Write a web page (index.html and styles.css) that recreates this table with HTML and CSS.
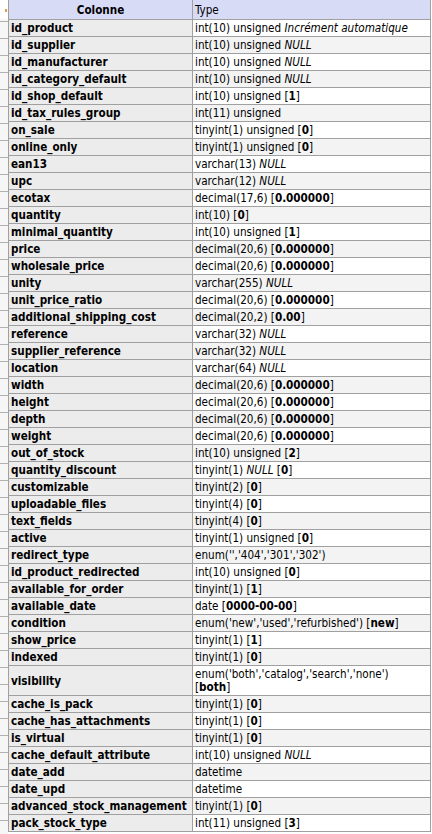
FILE: index.html
```html
<!DOCTYPE html>
<html>
<head>
<meta charset="utf-8">
<link rel="stylesheet" href="styles.css">
</head>
<body>
<div class="page">
  <div class="strip">
    <div class="strip-top"><span class="dot"></span></div>
  </div>
  <table class="struct">
    <thead>
      <tr><th class="col-name">Colonne</th><th class="col-type">Type</th></tr>
    </thead>
    <tbody>
      <tr><th>id_product</th><td>int(10) unsigned <i>Incrément automatique</i></td></tr>
      <tr class="odd"><th>id_supplier</th><td>int(10) unsigned <i>NULL</i></td></tr>
      <tr><th>id_manufacturer</th><td>int(10) unsigned <i>NULL</i></td></tr>
      <tr class="odd"><th>id_category_default</th><td>int(10) unsigned <i>NULL</i></td></tr>
      <tr><th>id_shop_default</th><td>int(10) unsigned [<b>1</b>]</td></tr>
      <tr class="odd"><th>id_tax_rules_group</th><td>int(11) unsigned</td></tr>
      <tr><th>on_sale</th><td>tinyint(1) unsigned [<b>0</b>]</td></tr>
      <tr class="odd"><th>online_only</th><td>tinyint(1) unsigned [<b>0</b>]</td></tr>
      <tr><th>ean13</th><td>varchar(13) <i>NULL</i></td></tr>
      <tr class="odd"><th>upc</th><td>varchar(12) <i>NULL</i></td></tr>
      <tr><th>ecotax</th><td>decimal(17,6) [<b>0.000000</b>]</td></tr>
      <tr class="odd"><th>quantity</th><td>int(10) [<b>0</b>]</td></tr>
      <tr><th>minimal_quantity</th><td>int(10) unsigned [<b>1</b>]</td></tr>
      <tr class="odd"><th>price</th><td>decimal(20,6) [<b>0.000000</b>]</td></tr>
      <tr><th>wholesale_price</th><td>decimal(20,6) [<b>0.000000</b>]</td></tr>
      <tr class="odd"><th>unity</th><td>varchar(255) <i>NULL</i></td></tr>
      <tr><th>unit_price_ratio</th><td>decimal(20,6) [<b>0.000000</b>]</td></tr>
      <tr class="odd"><th>additional_shipping_cost</th><td>decimal(20,2) [<b>0.00</b>]</td></tr>
      <tr><th>reference</th><td>varchar(32) <i>NULL</i></td></tr>
      <tr class="odd"><th>supplier_reference</th><td>varchar(32) <i>NULL</i></td></tr>
      <tr><th>location</th><td>varchar(64) <i>NULL</i></td></tr>
      <tr class="odd"><th>width</th><td>decimal(20,6) [<b>0.000000</b>]</td></tr>
      <tr><th>height</th><td>decimal(20,6) [<b>0.000000</b>]</td></tr>
      <tr class="odd"><th>depth</th><td>decimal(20,6) [<b>0.000000</b>]</td></tr>
      <tr><th>weight</th><td>decimal(20,6) [<b>0.000000</b>]</td></tr>
      <tr class="odd"><th>out_of_stock</th><td>int(10) unsigned [<b>2</b>]</td></tr>
      <tr><th>quantity_discount</th><td>tinyint(1) <i>NULL</i> [<b>0</b>]</td></tr>
      <tr class="odd"><th>customizable</th><td>tinyint(2) [<b>0</b>]</td></tr>
      <tr><th>uploadable_files</th><td>tinyint(4) [<b>0</b>]</td></tr>
      <tr class="odd"><th>text_fields</th><td>tinyint(4) [<b>0</b>]</td></tr>
      <tr><th>active</th><td>tinyint(1) unsigned [<b>0</b>]</td></tr>
      <tr class="odd"><th>redirect_type</th><td>enum('','404','301','302')</td></tr>
      <tr><th>id_product_redirected</th><td>int(10) unsigned [<b>0</b>]</td></tr>
      <tr class="odd"><th>available_for_order</th><td>tinyint(1) [<b>1</b>]</td></tr>
      <tr><th>available_date</th><td>date [<b>0000-00-00</b>]</td></tr>
      <tr class="odd"><th>condition</th><td>enum('new','used','refurbished') [<b>new</b>]</td></tr>
      <tr><th>show_price</th><td>tinyint(1) [<b>1</b>]</td></tr>
      <tr class="odd"><th>indexed</th><td>tinyint(1) [<b>0</b>]</td></tr>
      <tr><th>visibility</th><td>enum('both','catalog','search','none')<br>[<b>both</b>]</td></tr>
      <tr class="odd"><th>cache_is_pack</th><td>tinyint(1) [<b>0</b>]</td></tr>
      <tr><th>cache_has_attachments</th><td>tinyint(1) [<b>0</b>]</td></tr>
      <tr class="odd"><th>is_virtual</th><td>tinyint(1) [<b>0</b>]</td></tr>
      <tr><th>cache_default_attribute</th><td>int(10) unsigned <i>NULL</i></td></tr>
      <tr class="odd"><th>date_add</th><td>datetime</td></tr>
      <tr><th>date_upd</th><td>datetime</td></tr>
      <tr class="odd"><th>advanced_stock_management</th><td>tinyint(1) [<b>0</b>]</td></tr>
      <tr><th>pack_stock_type</th><td>int(11) unsigned [<b>3</b>]</td></tr>
    </tbody>
  </table>
</div>
</body>
</html>
```

FILE: styles.css
```css
html, body {
  margin: 0;
  padding: 0;
  background: #ffffff;
}

.page {
  display: flex;
  align-items: flex-start;
}

.strip {
  width: 8px;
  flex: none;
  height: 834px;
  background: repeating-linear-gradient(
    to bottom,
    #f6f6f6 0px,
    #f6f6f6 16px,
    #b0b0b0 16px,
    #b0b0b0 17px
  );
  background-position: 0 5px;
}

.strip-top {
  height: 19px;
  background: #ffffff;
  position: relative;
}

.dot {
  position: absolute;
  left: 5px;
  top: 9px;
  width: 2px;
  height: 3px;
  background: #e0a050;
}

.struct {
  border-collapse: collapse;
  width: 423px;
  font-family: "DejaVu Sans Condensed", "DejaVu Sans", sans-serif;
  font-size: 11.6px;
  line-height: 13px;
  color: #000;
  table-layout: fixed;
}

.struct th,
.struct td {
  border: 1px solid #a0a0a0;
  padding: 2px 2px 1px;
  vertical-align: middle;
  height: 13px;
}

.struct thead th {
  background: #d8dbf6;
  height: 16px;
  padding: 2px 2px 1px;
  border-top: none;
}

.col-name {
  width: 179px;
  text-align: center;
  font-weight: bold;
}

.col-type {
  text-align: left;
  font-weight: normal;
}

.struct tbody th {
  background: #ececec;
  text-align: left;
  font-weight: bold;
}

.struct tbody td {
  background: #ffffff;
}

.struct tbody tr.odd td {
  background: #f3f3f3;
}
```
